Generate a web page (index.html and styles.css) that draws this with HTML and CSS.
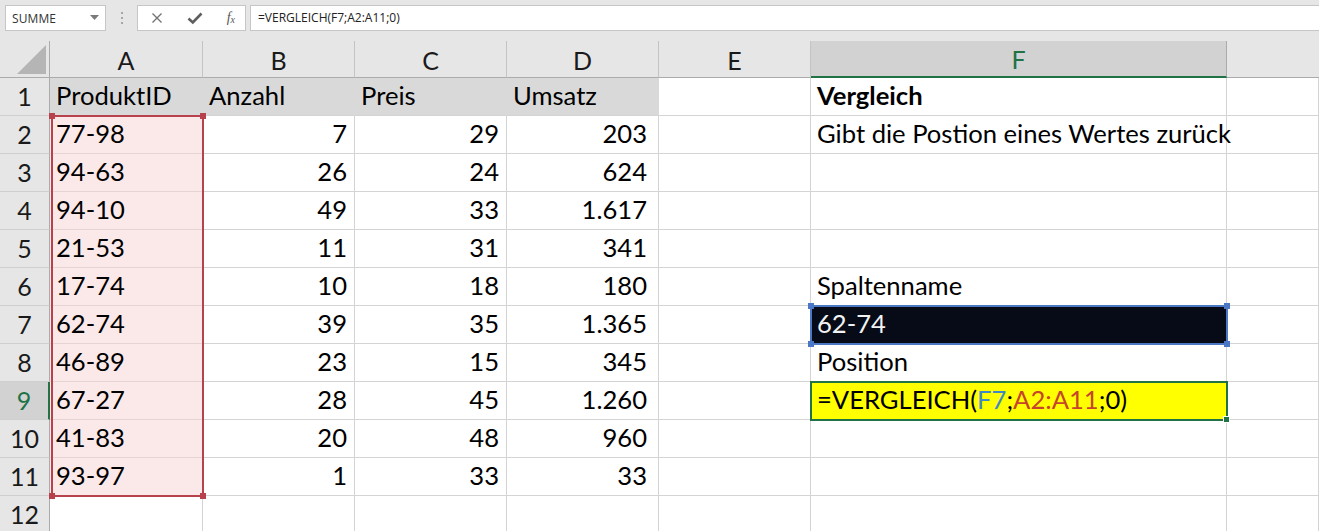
FILE: index.html
```html
<!DOCTYPE html>
<html lang="de">
<head>
<meta charset="utf-8">
<title>Vergleich</title>
<link rel="stylesheet" href="styles.css">
</head>
<body>
<div class="app">
  <div class="toolbar">
    <div class="namebox">
      <span class="name">SUMME</span>
      <svg class="dd" width="9" height="5" viewBox="0 0 9 5"><polygon points="0,0 9,0 4.5,5" fill="#7a7a7a"/></svg>
    </div>
    <div class="grip"><i></i><i></i><i></i></div>
    <div class="iconbox">
      <svg class="ic" width="14" height="14" viewBox="0 0 14 14"><path d="M2.5 2.5 L11.5 11.5 M11.5 2.5 L2.5 11.5" stroke="#707070" stroke-width="1.3" fill="none"/></svg>
      <svg class="ic" width="16" height="14" viewBox="0 0 16 14"><path d="M1.5 7.5 L5.8 11.5 L14.5 2.5" stroke="#5e5e5e" stroke-width="2.6" fill="none"/></svg>
      <span class="fx">f<sub>x</sub></span>
    </div>
    <div class="formula">=VERGLEICH(F7;A2:A11;0)</div>
  </div>

  <div class="sheet">
    <div class="corner"><svg width="29" height="29" viewBox="0 0 29 29"><polygon points="29,0 29,29 0,29" fill="#b5b5b5"/></svg></div>
    <div class="ch">A</div><div class="ch">B</div><div class="ch">C</div><div class="ch">D</div><div class="ch">E</div><div class="ch chsel">F</div><div class="ch chlast"></div>

    <div class="rh">1</div><div class="c hd">ProduktID</div><div class="c hd">Anzahl</div><div class="c hd">Preis</div><div class="c hd">Umsatz</div><div class="c"></div><div class="c bold">Vergleich</div><div class="c"></div>
    <div class="rh">2</div><div class="c sel">77-98</div><div class="c r">7</div><div class="c r">29</div><div class="c r rd">203</div><div class="c"></div><div class="c">Gibt die Postion eines Wertes zurück</div><div class="c"></div>
    <div class="rh">3</div><div class="c sel">94-63</div><div class="c r">26</div><div class="c r">24</div><div class="c r rd">624</div><div class="c"></div><div class="c"></div><div class="c"></div>
    <div class="rh">4</div><div class="c sel">94-10</div><div class="c r">49</div><div class="c r">33</div><div class="c r rd">1.617</div><div class="c"></div><div class="c"></div><div class="c"></div>
    <div class="rh">5</div><div class="c sel">21-53</div><div class="c r">11</div><div class="c r">31</div><div class="c r rd">341</div><div class="c"></div><div class="c"></div><div class="c"></div>
    <div class="rh">6</div><div class="c sel">17-74</div><div class="c r">10</div><div class="c r">18</div><div class="c r rd">180</div><div class="c"></div><div class="c">Spaltenname</div><div class="c"></div>
    <div class="rh">7</div><div class="c sel">62-74</div><div class="c r">39</div><div class="c r">35</div><div class="c r rd">1.365</div><div class="c"></div><div class="c dark">62-74</div><div class="c"></div>
    <div class="rh">8</div><div class="c sel">46-89</div><div class="c r">23</div><div class="c r">15</div><div class="c r rd">345</div><div class="c"></div><div class="c">Position</div><div class="c"></div>
    <div class="rh rhsel">9</div><div class="c sel">67-27</div><div class="c r">28</div><div class="c r">45</div><div class="c r rd">1.260</div><div class="c"></div><div class="c yellow">=VERGLEICH(<span class="refb">F7</span>;<span class="refr">A2:A11</span>;0)</div><div class="c"></div>
    <div class="rh">10</div><div class="c sel">41-83</div><div class="c r">20</div><div class="c r">48</div><div class="c r rd">960</div><div class="c"></div><div class="c"></div><div class="c"></div>
    <div class="rh">11</div><div class="c sel">93-97</div><div class="c r">1</div><div class="c r">33</div><div class="c r rd">33</div><div class="c"></div><div class="c"></div><div class="c"></div>
    <div class="rh">12</div><div class="c"></div><div class="c"></div><div class="c"></div><div class="c"></div><div class="c"></div><div class="c"></div><div class="c"></div>

    <div class="range-red"><i class="h tl"></i><i class="h tr"></i><i class="h bl"></i><i class="h br"></i></div>
    <div class="range-blue"><i class="h tl"></i><i class="h tr"></i><i class="h bl"></i><i class="h br"></i></div>
    <div class="active"><i class="h br"></i></div>
  </div>
</div>
</body>
</html>
```

FILE: styles.css
```css
* { box-sizing: border-box; }
html, body { margin: 0; padding: 0; }
body {
  width: 1319px;
  height: 531px;
  overflow: hidden;
  background: #e6e6e6;
  font-family: "Lato", "Liberation Sans", sans-serif;
}
.app { width: 1319px; height: 531px; overflow: hidden; }

/* toolbar */
.toolbar {
  height: 41px;
  display: flex;
  align-items: flex-start;
  padding-top: 5px;
  background: #e6e6e6;
}
.namebox {
  margin-left: 5px;
  width: 101px;
  height: 26px;
  background: #fff;
  border: 1px solid #c6c6c6;
  display: flex;
  align-items: center;
  justify-content: space-between;
  padding: 0 6px 0 6px;
}
.name {
  font-family: "Open Sans", "Liberation Sans", sans-serif;
  font-size: 12px;
  color: #333;
  letter-spacing: 0.1px;
}
.dd { margin-top: -1px; }
.grip {
  width: 31px;
  height: 26px;
  display: flex;
  flex-direction: column;
  align-items: center;
  justify-content: center;
  gap: 3px;
}
.grip i {
  display: block;
  width: 2px;
  height: 2px;
  background: #a6a6a6;
}
.iconbox {
  width: 109px;
  height: 26px;
  background: #fff;
  border: 1px solid #c6c6c6;
  display: flex;
  align-items: center;
  justify-content: space-between;
  padding: 0 10px 0 12px;
}
.fx {
  font-family: "Liberation Serif", serif;
  font-style: italic;
  font-size: 14px;
  color: #555;
  line-height: 1;
}
.fx sub { font-size: 10px; vertical-align: -1px; }
.formula {
  flex: 1;
  margin-left: 4px;
  height: 26px;
  background: #fff;
  border: 1px solid #c6c6c6;
  border-right: none;
  font-family: "Open Sans", "Liberation Sans", sans-serif;
  font-size: 12px;
  color: #222;
  line-height: 24px;
  padding-left: 7px;
}

/* sheet */
.sheet {
  position: relative;
  display: grid;
  grid-template-columns: 50px 153px 152px 152px 152px 152px 416px 92px;
  grid-template-rows: 37px repeat(12, 38px);
  background: #fff;
  font-size: 25.6px;
  color: #000;
}
.corner {
  background: #e6e6e6;
  border-right: 1px solid #ababab;
  border-bottom: 1px solid #ababab;
  display: flex;
  align-items: flex-end;
  justify-content: flex-end;
  padding: 0 3px 3px 0;
}
.corner svg { display: block; }
.ch {
  background: #e6e6e6;
  border-right: 1px solid #c4c4c4;
  border-bottom: 1px solid #ababab;
  display: flex;
  align-items: center;
  justify-content: center;
  font-size: 25px;
  line-height: 1;
  padding-top: 2px;
  color: #1a1a1a;
}
.chsel {
  background: #d2d2d2;
  color: #217346;
  border-bottom: 2px solid #217346;
  border-right-color: #ababab;
}
.chlast { border-right: none; }
.rh {
  background: #e6e6e6;
  border-right: 1px solid #ababab;
  border-bottom: 1px solid #cfcfcf;
  display: flex;
  align-items: flex-end;
  justify-content: center;
  padding-bottom: 6px;
  font-size: 25px;
  line-height: 1;
  color: #1a1a1a;
}
.rhsel {
  background: #d2d2d2;
  color: #217346;
  border-right: 2px solid #217346;
}
.c {
  border-right: 1px solid #d4d4d4;
  border-bottom: 1px solid #d4d4d4;
  display: flex;
  align-items: flex-end;
  padding: 0 7px 6px 6px;
  line-height: 1;
  white-space: nowrap;
  overflow: visible;
}
.c.r { justify-content: flex-end; }
.c.rd { padding-right: 11px; }
.hd {
  background: #d9d9d9;
  border-right-color: #d9d9d9;
}
.bold { font-weight: 700; }
.sel {
  background: #fbe9e9;
  border-bottom-color: #e6d3d3;
}
.dark {
  background: #060b17;
  color: #f2f2f2;
  border-color: #060b17;
}
.yellow { background: #ffff00; }
.refb { color: #3f87c6; }
.refr { color: #c6452a; }

/* overlays */
.range-red {
  position: absolute;
  left: 51px;
  top: 74px;
  width: 153px;
  height: 382px;
  border: 2px solid #b7414d;
}
.range-blue {
  position: absolute;
  left: 810px;
  top: 264px;
  width: 418px;
  height: 40px;
  border: 2px solid #4a78c5;
}
.active {
  position: absolute;
  left: 810px;
  top: 340px;
  width: 418px;
  height: 40px;
  border: 2px solid #217346;
}
.h {
  position: absolute;
  width: 6px;
  height: 6px;
}
.range-red .h { background: #b7414d; }
.range-blue .h { background: #4a78c5; }
.active .h { background: #217346; border: 1px solid #fff; width: 7px; height: 7px; }
.tl { left: -4px; top: -4px; }
.tr { right: -4px; top: -4px; }
.bl { left: -4px; bottom: -4px; }
.br { right: -4px; bottom: -4px; }
```
